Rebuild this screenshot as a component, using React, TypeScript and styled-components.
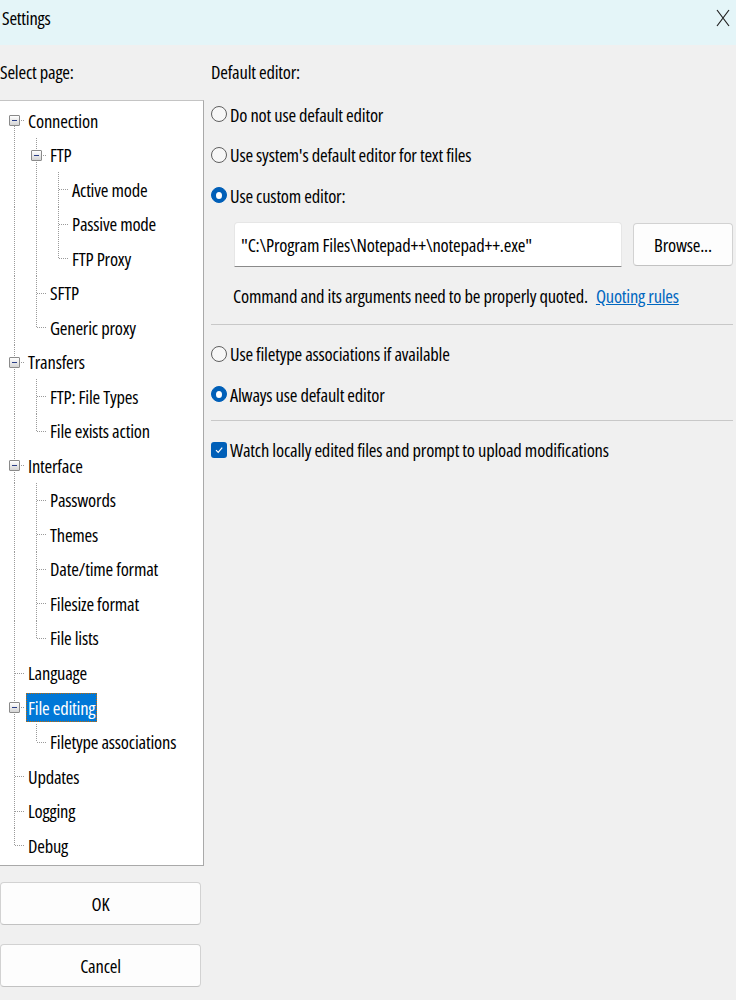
import React from "react";
import styled, { createGlobalStyle } from "styled-components";

const GlobalStyle = createGlobalStyle`
  html, body {
    margin: 0;
    padding: 0;
    background: #f0f0f0;
  }
  body {
    font-family: "Open Sans", "Roboto Condensed", sans-serif;
    font-stretch: 75%;
    font-size: 18.5px;
    font-weight: 400;
    letter-spacing: -0.2px;
    color: #000;
    width: 736px;
    height: 1000px;
    overflow: hidden;
  }
`;

const Window = styled.div`
  width: 736px;
  height: 1000px;
  display: flex;
  flex-direction: column;
  background: #f0f0f0;
`;

const TitleBar = styled.div`
  height: 45px;
  flex: none;
  background: #e4f5f8;
  display: flex;
  justify-content: space-between;
  align-items: flex-start;
  padding: 6px 6px 0 2px;
  box-sizing: border-box;
`;

const Title = styled.div`
  line-height: 24px;
`;

const CloseIcon = styled.svg`
  width: 14px;
  height: 18px;
  margin-top: 3px;
`;

const Content = styled.div`
  display: grid;
  grid-template-columns: 203px 1fr;
  column-gap: 8px;
  padding-top: 17px;
`;

const LeftColumn = styled.div`
  display: flex;
  flex-direction: column;
`;

const RightColumn = styled.div`
  display: flex;
  flex-direction: column;
  padding-right: 3px;
`;

const Caption = styled.div`
  height: 20px;
  line-height: 20px;
  white-space: nowrap;
`;

const TreeBox = styled.div`
  margin-top: 18px;
  margin-left: -1px;
  width: 205px;
  height: 766px;
  box-sizing: border-box;
  background: #fff;
  border: 1px solid #a9a9a9;
  border-top-color: #c4c4c4;
  padding: 2px 0 0 3px;
`;

const TreeRow = styled.div`
  height: 34.53px;
  display: flex;
  align-items: center;
`;

const dotV = `repeating-linear-gradient(to bottom, #9a9a9a 0 1px, transparent 1px 2px)`;
const dotH = `repeating-linear-gradient(to right, #9a9a9a 0 1px, transparent 1px 2px)`;

const Guide = styled.div<{ $line: boolean }>`
  width: 22px;
  align-self: stretch;
  flex: none;
  position: relative;
  &::before {
    content: "";
    display: ${(p) => (p.$line ? "block" : "none")};
    position: absolute;
    left: 11px;
    top: 0;
    bottom: 0;
    width: 1px;
    background: ${dotV};
  }
`;

const Connector = styled.div<{ $up: boolean; $down: boolean }>`
  width: 22px;
  align-self: stretch;
  flex: none;
  position: relative;
  &::before {
    content: "";
    position: absolute;
    left: 11px;
    width: 1px;
    top: ${(p) => (p.$up ? "0" : "50%")};
    bottom: ${(p) => (p.$down ? "0" : "50%")};
    background: ${dotV};
  }
  &::after {
    content: "";
    position: absolute;
    left: 12px;
    right: 0;
    top: 50%;
    height: 1px;
    background: ${dotH};
  }
`;

const Expander = styled.div`
  position: absolute;
  left: 6px;
  top: 50%;
  margin-top: -5px;
  width: 9px;
  height: 9px;
  border: 1px solid #8a8a8a;
  border-radius: 1px;
  background: linear-gradient(#ffffff, #d4d4d4);
  z-index: 1;
  &::after {
    content: "";
    position: absolute;
    left: 2px;
    right: 2px;
    top: 4px;
    height: 1px;
    background: #2b3f87;
  }
`;

const NodeLabel = styled.span<{ $selected?: boolean }>`
  height: 29px;
  line-height: 29px;
  padding: 0 2px;
  margin-left: 1px;
  white-space: nowrap;
  box-sizing: border-box;
  background: ${(p) => (p.$selected ? "#0078d7" : "transparent")};
  color: ${(p) => (p.$selected ? "#fff" : "#000")};
  outline: ${(p) => (p.$selected ? "1px dotted #c46a00" : "none")};
  outline-offset: -1px;
`;

const Button = styled.button`
  display: block;
  width: 201px;
  height: 43px;
  border: 1px solid #d2d2d2;
  border-bottom-color: #c2c2c2;
  border-radius: 4px;
  background: #fdfdfd;
  font-family: inherit;
  font-size: inherit;
  font-stretch: inherit;
  font-weight: 400;
  letter-spacing: inherit;
  color: #000;
  padding: 0;
`;

const OkButton = styled(Button)`
  margin-top: 16px;
`;

const CancelButton = styled(Button)`
  margin-top: 19px;
`;

const OptionRow = styled.label`
  height: 40.5px;
  display: flex;
  align-items: center;
  gap: 3px;
  white-space: nowrap;
`;

const FirstGroup = styled.div`
  margin-top: 12px;
`;

const RadioMark = styled.span<{ $checked: boolean }>`
  width: 16px;
  height: 16px;
  flex: none;
  border-radius: 50%;
  box-sizing: border-box;
  border: 1px solid ${(p) => (p.$checked ? "#005fb8" : "#5f5f5f")};
  background: ${(p) => (p.$checked ? "#005fb8" : "#f7f7f7")};
  display: flex;
  align-items: center;
  justify-content: center;
  &::after {
    content: "";
    display: ${(p) => (p.$checked ? "block" : "none")};
    width: 6px;
    height: 7px;
    border-radius: 50%;
    background: #fff;
  }
`;

const CheckMark = styled.span`
  width: 16px;
  height: 16px;
  flex: none;
  border-radius: 3px;
  background: #005fb8;
  display: flex;
  align-items: center;
  justify-content: center;
`;

const EditorRow = styled.div`
  display: flex;
  align-items: center;
  gap: 11px;
  margin-top: 6px;
  padding-left: 23px;
`;

const PathField = styled.div`
  width: 388px;
  height: 45px;
  box-sizing: border-box;
  background: #fff;
  border: 1px solid #e6e6e6;
  border-bottom: 1px solid #8a8a8a;
  border-radius: 4px 4px 0 0;
  padding-left: 6px;
  display: flex;
  align-items: center;
  white-space: nowrap;
`;

const BrowseButton = styled(Button)`
  width: 100px;
  height: 43px;
`;

const Note = styled.div`
  margin-top: 19px;
  padding-left: 22px;
  height: 20px;
  line-height: 20px;
  white-space: nowrap;
`;

const Link = styled.a`
  color: #0067c0;
  text-decoration: underline;
  margin-left: 8px;
`;

const Separator = styled.hr<{ $gap: number }>`
  border: none;
  height: 1px;
  background: #c8c8c8;
  margin: ${(p) => p.$gap}px 0 0 0;
`;

const Group = styled.div`
  margin-top: 9px;
`;

type Node = { label: string; children?: Node[]; selected?: boolean };

const tree: Node[] = [
  {
    label: "Connection",
    children: [
      {
        label: "FTP",
        children: [{ label: "Active mode" }, { label: "Passive mode" }, { label: "FTP Proxy" }],
      },
      { label: "SFTP" },
      { label: "Generic proxy" },
    ],
  },
  { label: "Transfers", children: [{ label: "FTP: File Types" }, { label: "File exists action" }] },
  {
    label: "Interface",
    children: [
      { label: "Passwords" },
      { label: "Themes" },
      { label: "Date/time format" },
      { label: "Filesize format" },
      { label: "File lists" },
    ],
  },
  { label: "Language" },
  { label: "File editing", selected: true, children: [{ label: "Filetype associations" }] },
  { label: "Updates" },
  { label: "Logging" },
  { label: "Debug" },
];

type Flat = {
  node: Node;
  guides: boolean[];
  up: boolean;
  down: boolean;
};

function flatten(nodes: Node[], guides: boolean[], out: Flat[], root: boolean) {
  nodes.forEach((node, i) => {
    const last = i === nodes.length - 1;
    out.push({ node, guides, up: !(root && i === 0), down: !last });
    if (node.children) flatten(node.children, [...guides, !last], out, false);
  });
  return out;
}

const rows = flatten(tree, [], [], true);

const CheckSvg = () => (
  <svg width="10" height="10" viewBox="0 0 10 10">
    <path d="M2 5.2 L4.2 7.4 L8.2 2.6" fill="none" stroke="#fff" strokeWidth="1.2" />
  </svg>
);

export default function App() {
  return (
    <Window>
      <GlobalStyle />
      <TitleBar>
        <Title>Settings</Title>
        <CloseIcon viewBox="0 0 14 18">
          <path d="M1 1 L13 17 M13 1 L1 17" stroke="#222" strokeWidth="1.2" fill="none" />
        </CloseIcon>
      </TitleBar>
      <Content>
        <LeftColumn>
          <Caption>Select page:</Caption>
          <TreeBox>
            {rows.map((r, idx) => (
              <TreeRow key={idx}>
                {r.guides.map((g, gi) => (
                  <Guide key={gi} $line={g} />
                ))}
                <Connector $up={r.up} $down={r.down}>
                  {r.node.children && <Expander />}
                </Connector>
                <NodeLabel $selected={r.node.selected}>{r.node.label}</NodeLabel>
              </TreeRow>
            ))}
          </TreeBox>
          <OkButton>OK</OkButton>
          <CancelButton>Cancel</CancelButton>
        </LeftColumn>
        <RightColumn>
          <Caption>Default editor:</Caption>
          <FirstGroup>
            <OptionRow>
              <RadioMark $checked={false} />
              Do not use default editor
            </OptionRow>
            <OptionRow>
              <RadioMark $checked={false} />
              Use system's default editor for text files
            </OptionRow>
            <OptionRow>
              <RadioMark $checked />
              Use custom editor:
            </OptionRow>
          </FirstGroup>
          <EditorRow>
            <PathField>"C:\Program Files\Notepad++\notepad++.exe"</PathField>
            <BrowseButton>Browse...</BrowseButton>
          </EditorRow>
          <Note>
            Command and its arguments need to be properly quoted.
            <Link>Quoting rules</Link>
          </Note>
          <Separator $gap={18} />
          <Group>
            <OptionRow>
              <RadioMark $checked={false} />
              Use filetype associations if available
            </OptionRow>
            <OptionRow>
              <RadioMark $checked />
              Always use default editor
            </OptionRow>
          </Group>
          <Separator $gap={5} />
          <Group>
            <OptionRow>
              <CheckMark>
                <CheckSvg />
              </CheckMark>
              Watch locally edited files and prompt to upload modifications
            </OptionRow>
          </Group>
        </RightColumn>
      </Content>
    </Window>
  );
}
